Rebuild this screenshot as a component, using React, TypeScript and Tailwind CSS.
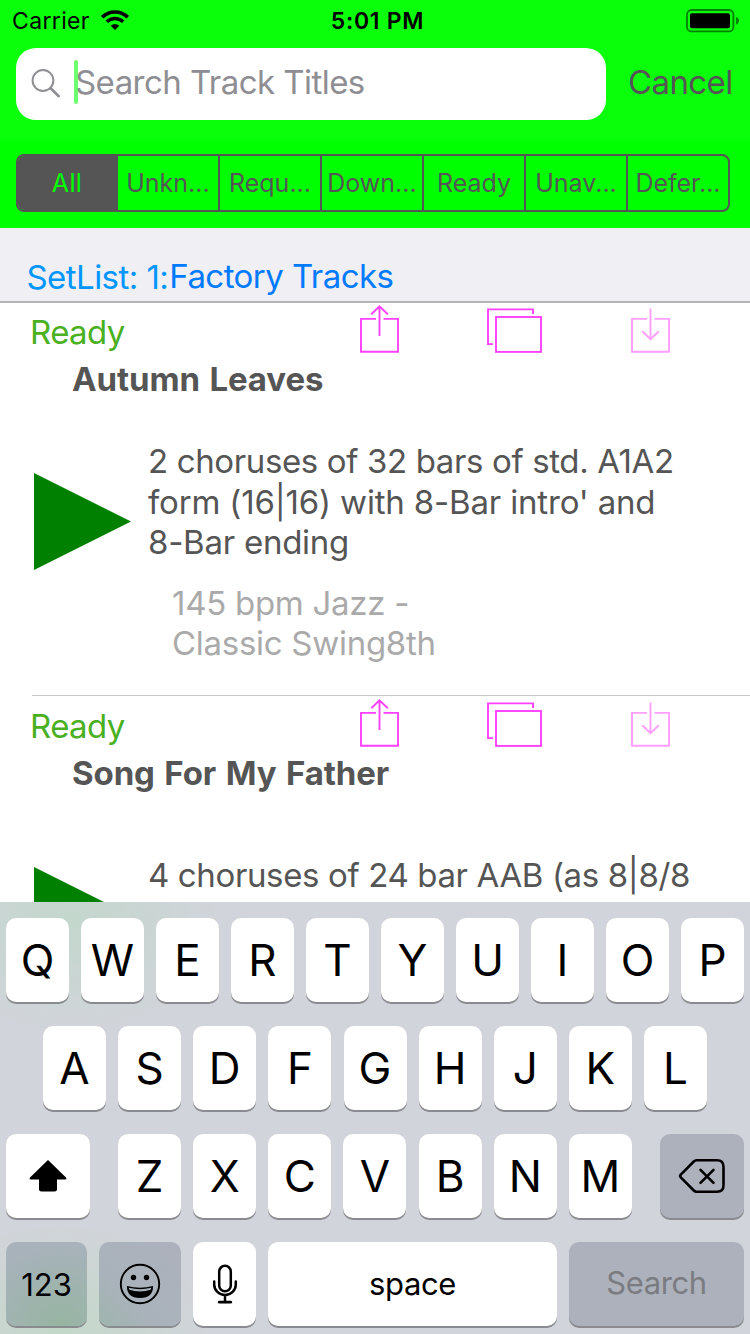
import type { ReactNode } from 'react'
import clsx from 'clsx'

type Line = { text: string; tracking: string }

type Track = {
  status: string
  title: string
  description: Line[]
  style: string[]
}

const FILTERS = ['All', 'Unkn...', 'Requ...', 'Down...', 'Ready', 'Unav...', 'Defer...']

const TRACKS: Track[] = [
  {
    status: 'Ready',
    title: 'Autumn Leaves',
    description: [
      { text: '2 choruses of 32 bars of std. A1A2', tracking: 'tracking-[-0.37px]' },
      { text: "form (16|16) with 8-Bar intro' and", tracking: 'tracking-[-0.17px]' },
      { text: '8-Bar ending', tracking: 'tracking-[-0.25px]' },
    ],
    style: ['145 bpm Jazz -', 'Classic Swing8th'],
  },
  {
    status: 'Ready',
    title: 'Song For My Father',
    description: [
      { text: '4 choruses of 24 bar AAB (as 8|8/8', tracking: 'tracking-[-0.37px]' },
      { text: 'swung (8ths) (with 8-Bar intro)', tracking: 'tracking-[-0.3px]' },
    ],
    style: [],
  },
]

function StatusBar() {
  return (
    <div className="flex h-10 items-center pl-3 pr-[11px] text-[23px] leading-10 text-black">
      <div className="flex flex-1 items-center gap-[11px]">
        <span className="mt-0.5 tracking-[0.35px]">Carrier</span>
        <svg width="28" height="20" viewBox="0 0 28 20" fill="none" stroke="#000">
          <path d="M1.2 7.2A18.2 18.2 0 0 1 26.8 7.2" strokeWidth="3.6" />
          <path d="M5.8 11.8A11.8 11.8 0 0 1 22.2 11.8" strokeWidth="3.4" />
          <path d="M14 20l-4.2-4.2a6 6 0 0 1 8.4 0z" fill="#000" stroke="none" />
        </svg>
      </div>
      <span className="ml-1 mt-0.5 font-semibold tracking-[0.7px]">5:01 PM</span>
      <div className="flex flex-1 justify-end">
        <svg className="mt-px" width="53" height="24" viewBox="0 0 53 24">
          <rect x="1" y="1" width="46.4" height="21.4" rx="4.5" fill="none" stroke="#000" strokeOpacity="0.5" strokeWidth="1.8" />
          <rect x="4" y="4.2" width="40" height="15" rx="2" fill="#000" />
          <path d="M50 8c2 .6 3 2 3 3.800s-1 3.200-3 3.800z" fill="#000" fillOpacity="0.5" />
        </svg>
      </div>
    </div>
  )
}

function SearchBar() {
  return (
    <div className="flex items-center pl-4 pt-2">
      <div className="relative flex h-[72px] w-[590px] items-center rounded-[20px] bg-white">
        <svg className="ml-[15px]" width="30" height="30" viewBox="0 0 30 30" fill="none" stroke="#8e8e93" strokeLinecap="round">
          <circle cx="12" cy="11.500" r="10.400" strokeWidth="2" />
          <path d="M19.600 19.200l8.200 8" strokeWidth="2.600" />
        </svg>
        <span className="ml-[14px] -mt-1 text-[33px] leading-10 tracking-[-0.55px] text-[#8e8e93]">Search Track Titles</span>
        <span className="absolute left-[58px] top-3 h-11 w-1 rounded-sm bg-[#5f5]/85" />
      </div>
      <span className="ml-[22px] -mt-1 text-[33px] leading-10 tracking-[-0.6px] text-[#555]">Cancel</span>
    </div>
  )
}

function ScopeBar() {
  return (
    <div className="mx-4 mt-[34px] flex h-[58px] w-[714px] overflow-hidden rounded-lg border-2 border-[#555]">
      {FILTERS.map((label, i) => (
        <div
          key={label}
          className={clsx(
            'flex shrink-0 items-center justify-center text-[25px] leading-none',
            i === 0 && 'w-[100px] bg-[#555] pr-0.5 tracking-[0.3px] text-[#0f0]',
            i > 0 && 'text-[#555]',
            i > 0 && i < FILTERS.length - 1 && 'w-[102px] border-r-2 border-[#555]',
            i === FILTERS.length - 1 && 'w-[100px]'
          )}
        >
          {label}
        </div>
      ))}
    </div>
  )
}

function ShareIcon() {
  return (
    <svg width="42" height="52" viewBox="0 0 42 52" fill="none" stroke="#ff40ff" strokeWidth="1.9">
      <path d="M17 16.900H2v32.900h37V16.900H24.500" />
      <path d="M20.500 34V4.500M12.300 12.200l8.200-7.900 8.300 7.900" />
    </svg>
  )
}

function WindowsIcon() {
  return (
    <svg width="56" height="52" viewBox="0 0 56 52" fill="none" stroke="#ff40ff" strokeWidth="1.900">
      <path d="M7 42.100H2V7.400h45V12" />
      <rect x="10" y="15" width="45" height="34.900" />
    </svg>
  )
}

function DownloadIcon() {
  return (
    <svg width="42" height="52" viewBox="0 0 42 52" fill="none" stroke="#ff9fff" strokeWidth="1.900">
      <path d="M17 16.900H2v32.900h37V16.900H24.500" />
      <path d="M20.500 6.500v31M12.300 29.200l8.200 7.900 8.300-7.900" />
    </svg>
  )
}

function TrackRow({ track }: { track: Track }) {
  return (
    <div className="relative h-[394px] text-[33px] text-[#555]">
      <div className="flex h-[57px]">
        <span className="ml-[30px] w-[329px] leading-[60px] tracking-[-0.6px] text-[#4ab01f]">{track.status}</span>
        <ShareIcon />
        <div className="ml-[85px]">
          <WindowsIcon />
        </div>
        <div className="ml-[88px]">
          <DownloadIcon />
        </div>
      </div>
      <h3 className="ml-[72px] font-bold leading-[41px] tracking-[-0.1px] whitespace-nowrap [word-spacing:1.8px]">{track.title}</h3>
      <div className="flex">
        <svg className="ml-[34px] mt-[73px] shrink-0" width="97" height="97" viewBox="0 0 97 97">
          <path d="M0 0l97 48.500L0 97z" fill="#008000" />
        </svg>
        <div className="ml-[17px] mt-[41px] whitespace-nowrap">
          <div className="flex h-[121.8px] flex-col justify-center">
            {track.description.map((line) => (
              <p key={line.text} className={clsx('leading-[40.5px]', line.tracking)}>{line.text}</p>
            ))}
          </div>
          <div className="ml-6 mt-[20.2px] tracking-[-0.28px] text-[#aaa]">
            {track.style.map((line) => (
              <p key={line} className="leading-10">{line}</p>
            ))}
          </div>
        </div>
      </div>
      <div className="absolute bottom-0 left-8 right-0 h-px bg-[#c8c7cc]" />
    </div>
  )
}

function Key({ className, children }: { className?: string; children: ReactNode }) {
  return (
    <div
      className={clsx(
        'flex h-[84px] items-center justify-center rounded-[10px] shadow-[0_2px_0_#898b8f]',
        className
      )}
    >
      {children}
    </div>
  )
}

function LetterKeys({ letters }: { letters: string }) {
  return letters.split('').map((letter) => (
    <Key key={letter} className="w-[63px] bg-white text-[44px] leading-none">
      {letter}
    </Key>
  ))
}

function Keyboard() {
  return (
    <div className="flex h-[432px] flex-col gap-6 bg-[#d1d4da] bg-[radial-gradient(ellipse_150px_110px_at_70px_20px,#c3d7cc,transparent),radial-gradient(ellipse_150px_110px_at_60px_432px,#c3d8c9,transparent)] pt-4 text-black">
      <div className="flex justify-between px-1.5">
        <LetterKeys letters="QWERTYUIOP" />
      </div>
      <div className="flex justify-between px-[43px]">
        <LetterKeys letters="ASDFGHJKL" />
      </div>
      <div className="flex justify-between px-1.5">
        <Key className="w-[84px] bg-white">
          <svg width="38" height="34" viewBox="0 0 38 34">
            <path d="M19 1L37 18.500q1.200 2-.8 2H28v9.500q0 2.500-2.500 2.500h-13Q10 32.500 10 30v-9.500H1.800q-2 0-.8-2z" fill="#000" />
          </svg>
        </Key>
        <div className="flex w-[514px] justify-between">
          <LetterKeys letters="ZXCVBNM" />
        </div>
        <Key className="w-[84px] bg-[#adb1bc]">
          <svg width="48" height="36" viewBox="0 0 48 36" fill="none" stroke="#000" strokeWidth="2.600" strokeLinecap="round" strokeLinejoin="round">
            <path d="M18.500 2.300H39q6.500 0 6.500 6.500v18.400q0 6.500-6.500 6.500H18.500q-1.500 0-2.700-1.200L2.800 19.300q-1.300-1.300 0-2.600l13-13.200q1.200-1.200 2.700-1.200z" />
            <path d="M22.500 11.800l13 13M35.500 11.800l-13 13" />
          </svg>
        </Key>
      </div>
      <div className="flex justify-between px-1.5">
        <Key className="w-[81px] bg-[radial-gradient(ellipse_90px_84px_at_55px_84px,#97b5a2,#a8b2bb)] text-[31px] leading-none">
          123
        </Key>
        <Key className="w-[82px] bg-[linear-gradient(45deg,#9fb5ac,#a9b2bb_35%,#adb1bc)]">
          <svg width="42" height="42" viewBox="0 0 42 42">
            <circle cx="21" cy="21" r="19.200" fill="none" stroke="#000" strokeWidth="1.900" />
            <circle cx="14.500" cy="14.500" r="2.700" />
            <circle cx="27.500" cy="14.500" r="2.700" />
            <path d="M8 23q13 3.400 26 0q.4 12-13 12T8 23z" />
            <path d="M9.800 24.800q11.200 2.800 22.400 0l-.6 2q-10.600 3.400-21.200 0z" fill="#aab2bb" />
          </svg>
        </Key>
        <Key className="w-[63px] bg-white">
          <svg width="26" height="40" viewBox="0 0 26 40" fill="none" stroke="#000" strokeWidth="2.500" strokeLinecap="round">
            <rect x="7.200" y="1.800" width="11.600" height="25.500" rx="5.800" />
            <path d="M2.200 17.500v3a10.800 10.500 0 0 0 21.600 0v-3M13 31v7" />
            <path d="M7.300 38.200h11.400" strokeWidth="2.800" />
          </svg>
        </Key>
        <Key className="w-[289px] bg-white text-[31px] leading-none tracking-[-0.4px]">
          <span className="-mt-0.5">space</span>
        </Key>
        <Key className="w-[175px] bg-[#adb1bb] text-[31px] leading-none tracking-[-0.4px] text-[#7a7c82]">
          <span className="-mt-1">Search</span>
        </Key>
      </div>
    </div>
  )
}

export default function App() {
  return (
    <div className="flex h-[1334px] w-[750px] flex-col overflow-hidden bg-white font-[Inter,sans-serif]">
      <header className="h-[228px] bg-[linear-gradient(#0aff0a_140px,#00ff00_140px)]">
        <StatusBar />
        <SearchBar />
        <ScopeBar />
      </header>

      <div className="flex h-[75px] items-end border-b-2 border-[#b4b4b9] bg-[#efeff4] pl-[26.500px] text-[33px] tracking-[-0.55px]">
        <span className="mr-px leading-[47px] tracking-[-0.55px] text-[#0096ff]">SetList: 1:</span>
        <span className="leading-[49px] text-[#007aff]">Factory Tracks</span>
      </div>

      <main className="h-[599px] overflow-hidden">
        <div className="-mt-px">
          {TRACKS.map((track) => (
            <TrackRow key={track.title} track={track} />
          ))}
        </div>
      </main>

      <Keyboard />
    </div>
  )
}
